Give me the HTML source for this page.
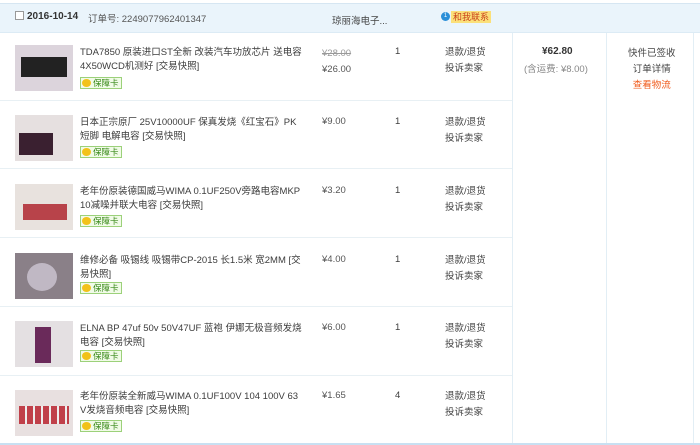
<!DOCTYPE html>
<html><head><meta charset="utf-8"><style>
*{margin:0;padding:0;box-sizing:border-box}
body{width:700px;height:445px;background:#fff;font-family:"Liberation Sans","Noto Sans CJK SC",sans-serif;font-size:9.5px;color:#3c3c3c;position:relative;overflow:hidden}
.abs{position:absolute}
.hdr{left:0;top:3px;width:700px;height:30px;background:#eaf4fb;border-top:1px solid #d6e6f2;border-bottom:1px solid #dcebf5}
.vl{width:1px;background:#e2eef5;top:33px;height:411px}
.hl{left:0;width:512px;height:1px;background:#e8f0f4}
.img{left:15px;width:58px;height:46px;background:linear-gradient(135deg,#e9e4e4,#d2ccd0);overflow:hidden}
.t{left:80px;width:222px;line-height:14px;color:#3c3c3c;word-break:break-all}
.badge{left:80px;height:12px;font-size:8.5px;color:#3a8a1a;border:1px solid #9cd17a;background:#f1fbe8;padding:0 2px 0 12px;line-height:10px}
.badge:before{content:"";position:absolute;left:1px;top:1px;width:9px;height:8px;border-radius:50%;background:#f2c21a}
.p{left:322px;color:#555}
.q{left:395px}
.a{left:445px;line-height:16px;color:#444}
</style></head><body>
<div class="abs hdr"></div>
<div class="abs" style="left:15px;top:11px;width:9px;height:9px;border:1px solid #999;background:#fff"></div>
<div class="abs" style="left:27px;top:11px;font-weight:bold;font-size:10px;color:#333">2016-10-14</div>
<div class="abs" style="left:88px;top:11px;color:#555">订单号: 2249077962401347</div>
<div class="abs" style="left:332px;top:13px;color:#444">琼丽海电子...</div>
<div class="abs" style="left:441px;top:12px;width:9px;height:9px;border-radius:50%;background:#2b8fd8;color:#fff;font-size:6px;text-align:center;line-height:9px">1</div>
<div class="abs" style="left:451px;top:11px;background:#fbe07a;color:#c9401a;font-size:9px;padding:0 2px;line-height:12px">和我联系</div>
<div class="abs vl" style="left:512px"></div>
<div class="abs vl" style="left:606px"></div>
<div class="abs vl" style="left:693px"></div>
<div class="abs" style="left:0;top:443px;width:700px;height:2px;background:#c8e0f2"></div>
<div class="abs hl" style="top:100px"></div>
<div class="abs hl" style="top:168px"></div>
<div class="abs hl" style="top:237px"></div>
<div class="abs hl" style="top:306px"></div>
<div class="abs hl" style="top:375px"></div>

<div class="abs" style="left:542px;top:46px;font-weight:bold;font-size:10px;color:#333">¥62.80</div>
<div class="abs" style="left:524px;top:61px;color:#888">(含运费: ¥8.00)</div>
<div class="abs" style="left:628px;top:46px;line-height:16px;text-align:center;color:#444">快件已签收<br>订单详情<br><span style="color:#f05a1a">查看物流</span></div>

<div class="abs img" style="top:45px;background:#dcd4dc"><div style="margin:12px 6px;width:46px;height:20px;background:#222"></div></div>
<div class="abs t" style="top:46px">TDA7850 原装进口ST全新 改装汽车功放芯片 送电容 4X50WCD机测好 [交易快照]</div>
<div class="abs badge" style="top:77px">保障卡</div>
<div class="abs p" style="top:46px;line-height:16px"><s style="color:#999">¥28.00</s><br>¥26.00</div>
<div class="abs q" style="top:46px">1</div>
<div class="abs a" style="top:45px">退款/退货<br>投诉卖家</div>

<div class="abs img" style="top:115px;background:#e6e0e0"><div style="margin:18px 4px;width:34px;height:22px;background:#3a2030"></div></div>
<div class="abs t" style="top:116px">日本正宗原厂 25V10000UF 保真发烧《红宝石》PK短脚 电解电容 [交易快照]</div>
<div class="abs badge" style="top:146px">保障卡</div>
<div class="abs p" style="top:116px">¥9.00</div>
<div class="abs q" style="top:116px">1</div>
<div class="abs a" style="top:115px">退款/退货<br>投诉卖家</div>

<div class="abs img" style="top:184px;background:#e8e2de"><div style="margin:20px 8px;width:44px;height:16px;background:#b8434a"></div></div>
<div class="abs t" style="top:185px">老年份原装德国威马WIMA 0.1UF250V旁路电容MKP10减噪并联大电容 [交易快照]</div>
<div class="abs badge" style="top:215px">保障卡</div>
<div class="abs p" style="top:185px">¥3.20</div>
<div class="abs q" style="top:185px">1</div>
<div class="abs a" style="top:184px">退款/退货<br>投诉卖家</div>

<div class="abs img" style="top:253px;background:#8a8088"><div style="margin:10px 12px;width:30px;height:28px;border-radius:50%;background:#c0b8c4"></div></div>
<div class="abs t" style="top:254px">维修必备 吸锡线 吸锡带CP-2015 长1.5米 宽2MM [交易快照]</div>
<div class="abs badge" style="top:282px">保障卡</div>
<div class="abs p" style="top:254px">¥4.00</div>
<div class="abs q" style="top:254px">1</div>
<div class="abs a" style="top:253px">退款/退货<br>投诉卖家</div>

<div class="abs img" style="top:321px;background:#e4e0e2"><div style="margin:6px 20px;width:16px;height:36px;background:#6a2a5a"></div></div>
<div class="abs t" style="top:322px">ELNA BP 47uf 50v 50V47UF 蓝袍 伊娜无极音频发烧电容 [交易快照]</div>
<div class="abs badge" style="top:350px">保障卡</div>
<div class="abs p" style="top:322px">¥6.00</div>
<div class="abs q" style="top:322px">1</div>
<div class="abs a" style="top:321px">退款/退货<br>投诉卖家</div>

<div class="abs img" style="top:390px;background:#e8e0e0"><div style="margin:16px 4px;width:50px;height:18px;background:repeating-linear-gradient(90deg,#c0404a 0 6px,#eee 6px 8px)"></div></div>
<div class="abs t" style="top:390px">老年份原装全新威马WIMA 0.1UF100V 104 100V 63V发烧音频电容 [交易快照]</div>
<div class="abs badge" style="top:420px">保障卡</div>
<div class="abs p" style="top:390px">¥1.65</div>
<div class="abs q" style="top:390px">4</div>
<div class="abs a" style="top:389px">退款/退货<br>投诉卖家</div>
</body></html>
